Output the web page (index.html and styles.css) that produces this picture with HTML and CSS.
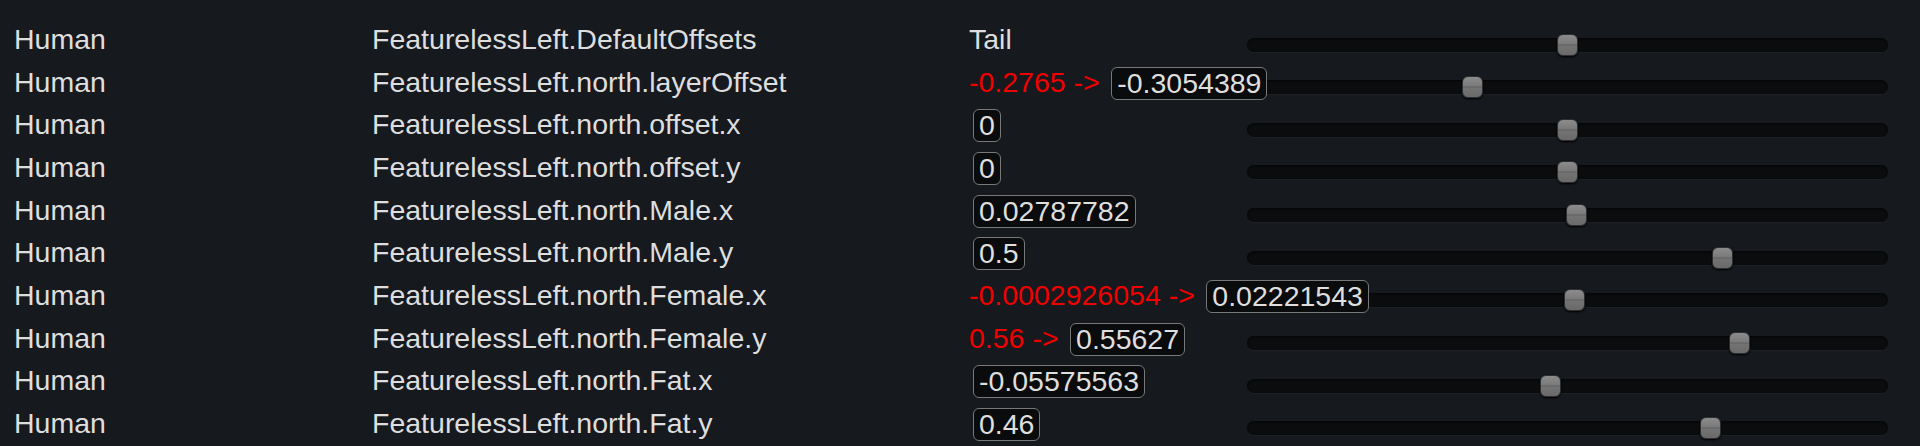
FILE: index.html
```html
<!DOCTYPE html>
<html lang="en">
<head>
  <meta charset="UTF-8">
  <title>Offsets</title>
  <link rel="stylesheet" href="styles.css">
</head>
<body>
  <div class="list" id="list">
    <!-- rows are added by the script below -->
  </div>

  <script>
    const list = document.getElementById("list");

    // [race, key, old value (or null), current value, slider value]
    const rows = [
      ["Human", "FeaturelessLeft.DefaultOffsets", null, "Tail", 0, true],
      ["Human", "FeaturelessLeft.north.layerOffset", "-0.2765", "-0.3054389", -0.3054389],
      ["Human", "FeaturelessLeft.north.offset.x", null, "0", 0],
      ["Human", "FeaturelessLeft.north.offset.y", null, "0", 0],
      ["Human", "FeaturelessLeft.north.Male.x", null, "0.02787782", 0.02787782],
      ["Human", "FeaturelessLeft.north.Male.y", null, "0.5", 0.5],
      ["Human", "FeaturelessLeft.north.Female.x", "-0.0002926054", "0.02221543", 0.02221543],
      ["Human", "FeaturelessLeft.north.Female.y", "0.56", "0.55627", 0.55627],
      ["Human", "FeaturelessLeft.north.Fat.x", null, "-0.05575563", -0.05575563],
      ["Human", "FeaturelessLeft.north.Fat.y", null, "0.46", 0.46]
    ];

    rows.forEach(([race, key, oldVal, val, num, plain]) => {
      const row = document.createElement("div");
      row.className = "row";

      let value = "";
      if (oldVal !== null) value += `<span class="changed">${oldVal} -&gt;</span>`;
      value += plain ? `<span>${val}</span>` : `<span class="field">${val}</span>`;

      // slider runs from -1 to 1
      const pos = ((num + 1) / 2).toFixed(4);

      row.innerHTML = `
        <div class="race">${race}</div>
        <div class="key">${key}</div>
        <div class="value">${value}</div>
        <div class="slider">
          <div class="track">
            <div class="thumb" style="left: calc((100% - 21px) * ${pos})"></div>
          </div>
        </div>
      `;
      list.appendChild(row);
    });
  </script>
</body>
</html>
```

FILE: styles.css
```css
body {
  margin: 0;
  background-color: #16191e;
  color: #dedede;
  font-family: "Liberation Sans", Arial, sans-serif;
  font-size: 28.5px;
  height: 446px;
  overflow: hidden;
}
.list {
  padding-top: 21px;
  padding-left: 14px;
}
.row {
  display: flex;
  height: 42.67px;
  line-height: 36px;
  white-space: nowrap;
}
.race {
  width: 358px;
  flex-shrink: 0;
}
.key {
  width: 597px;
  flex-shrink: 0;
}
.value {
  width: 278px;
  flex-shrink: 0;
  display: flex;
  align-items: flex-start;
  position: relative;
  z-index: 1;
}
.changed {
  color: #f00000;
  margin-right: 11.5px;
}
.field {
  margin-top: 3px;
  margin-left: 4px;
  height: 33px;
  box-sizing: border-box;
  line-height: 30px;
  padding: 0 5px;
  border: 1.5px solid #787878;
  border-radius: 6px;
  background-color: #0a0b0c;
}
.changed + .field {
  margin-left: 0;
}
.slider {
  width: 641px;
  flex-shrink: 0;
  padding-top: 16.5px;
}
.track {
  position: relative;
  height: 14px;
  border-radius: 7px;
  background-color: #0b0c0e;
  box-shadow: inset 0 1px 2px #050506, 0 1px 0 #1c1f24;
}
.thumb {
  position: absolute;
  top: -4px;
  width: 21px;
  height: 22px;
  box-sizing: border-box;
  border-radius: 6px;
  border: 1px solid #2e2f31;
  background: linear-gradient(#8c8c8c, #7a7a7a 45%, #5e5e5e 50%, #737373 55%, #6a6a6a);
  box-shadow: 0 1px 2px #000;
}
```
